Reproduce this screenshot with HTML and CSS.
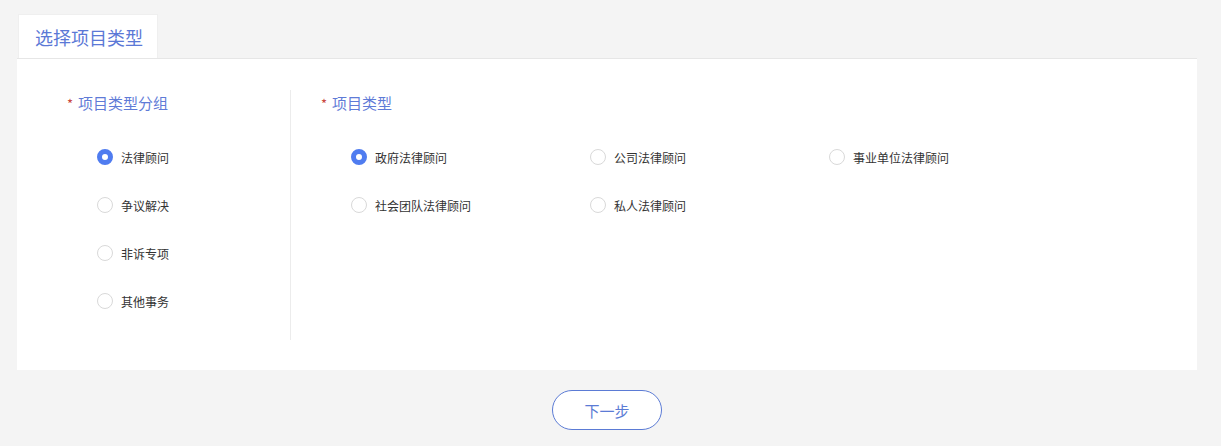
FILE: index.html
```html
<!DOCTYPE html>
<html lang="zh-CN">
<head>
<meta charset="utf-8">
<title>选择项目类型</title>
<link rel="stylesheet" href="styles.css">
</head>
<body>
<div class="page">
  <div class="tabs">
    <div class="tab active">选择项目类型</div>
  </div>
  <div class="card">
    <div class="col col-left">
      <div class="label"><span class="req">*</span>项目类型分组</div>
      <div class="options list">
        <label class="opt"><span class="radio checked"></span>法律顾问</label>
        <label class="opt"><span class="radio"></span>争议解决</label>
        <label class="opt"><span class="radio"></span>非诉专项</label>
        <label class="opt"><span class="radio"></span>其他事务</label>
      </div>
    </div>
    <div class="col col-right">
      <div class="label"><span class="req">*</span>项目类型</div>
      <div class="options grid">
        <label class="opt"><span class="radio checked"></span>政府法律顾问</label>
        <label class="opt"><span class="radio"></span>公司法律顾问</label>
        <label class="opt"><span class="radio"></span>事业单位法律顾问</label>
        <label class="opt"><span class="radio"></span>社会团队法律顾问</label>
        <label class="opt"><span class="radio"></span>私人法律顾问</label>
      </div>
    </div>
  </div>
  <div class="actions">
    <button class="btn-next">下一步</button>
  </div>
</div>
</body>
</html>
```

FILE: styles.css
```css
html, body {
  margin: 0;
  padding: 0;
  background: #f4f4f4;
  font-family: "Noto Sans CJK SC", "Noto Sans", sans-serif;
}
.page {
  padding: 14px 0 0 17px;
  width: 1180px;
}
.tabs {
  display: flex;
  padding-left: 1px;
}
.tab {
  width: 140px;
  height: 44px;
  box-sizing: border-box;
  padding-left: 16px;
  line-height: 44px;
  font-size: 18px;
  color: #5b78d6;
  background: #fff;
  border: 1px solid #efefef;
  border-bottom: none;
}
.card {
  display: flex;
  height: 312px;
  box-sizing: border-box;
  background: #fff;
  border-top: 1px solid #e6e6e6;
  padding: 31px 0 30px;
}
.col-left {
  width: 274px;
  border-right: 1px solid #ececec;
  padding-left: 50px;
  box-sizing: border-box;
}
.col-right {
  flex: 1;
  padding-left: 30px;
}
.label {
  margin-top: 2px;
  height: 22px;
  line-height: 22px;
  font-size: 15px;
  color: #5f7bd7;
}
.req {
  color: #c9463d;
  font-size: 13px;
  margin-right: 5px;
}
.options {
  margin-top: 31px;
  padding-left: 30px;
}
.list {
  display: flex;
  flex-direction: column;
  gap: 24px;
}
.grid {
  display: grid;
  grid-template-columns: repeat(3, 239px);
  row-gap: 24px;
}
.opt {
  display: flex;
  align-items: center;
  height: 24px;
  font-size: 12px;
  color: #333;
}
.radio {
  width: 16px;
  height: 16px;
  box-sizing: border-box;
  border: 1px solid #d9d9d9;
  border-radius: 50%;
  margin-right: 8px;
  background: #fff;
}
.radio.checked {
  border: 5px solid #4f7cf0;
}
.actions {
  display: flex;
  justify-content: center;
  padding-top: 20px;
}
.btn-next {
  width: 110px;
  height: 40px;
  border: 1px solid #5b7bd5;
  border-radius: 20px;
  background: #fff;
  color: #5b7bd5;
  font-size: 15px;
  font-family: "Noto Sans CJK SC", "Noto Sans", sans-serif;
}
```
